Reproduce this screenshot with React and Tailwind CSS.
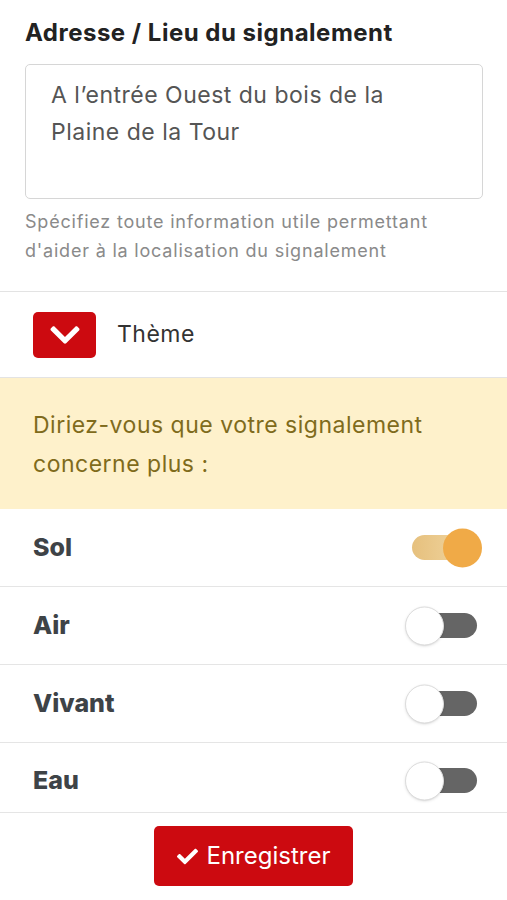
import { useState } from 'react';
import { FaCheck, FaChevronDown } from 'react-icons/fa';

const themes = [
  { id: 'sol', label: 'Sol' },
  { id: 'air', label: 'Air' },
  { id: 'vivant', label: 'Vivant' },
  { id: 'eau', label: 'Eau' },
];

function Toggle({ on, onChange }) {
  return (
    <button
      type="button"
      onClick={onChange}
      className="relative w-[65px] h-[25px] rounded-full shrink-0"
    >
      <span
        className={`absolute inset-0 rounded-full ${
          on ? 'bg-gradient-to-r from-[#e6c07d] to-[#f2d9a6]' : 'bg-[#656565]'
        }`}
      />
      <span
        className={`absolute top-1/2 -translate-y-1/2 w-[39px] h-[39px] rounded-full ${
          on
            ? 'right-[-5px] bg-[#f0aa47]'
            : 'left-[-7px] bg-white border border-[#dcdcdc] shadow-sm'
        }`}
      />
    </button>
  );
}

export default function App() {
  const [address, setAddress] = useState(
    'A l\u2019entrée Ouest du bois de la Plaine de la Tour'
  );
  const [selected, setSelected] = useState('sol');

  return (
    <div className="w-[507px] h-[900px] overflow-hidden bg-white flex flex-col font-['Inter',sans-serif]">
      {/* Address */}
      <div className="px-[25px] pt-[18px] pr-[24px]">
        <label className="block text-[24px] leading-[30px] tracking-[0.5px] font-bold text-[#222]">
          Adresse / Lieu du signalement
        </label>
        <textarea
          value={address}
          onChange={(e) => setAddress(e.target.value)}
          className="mt-[16px] block w-full h-[135px] resize-none rounded-[5px] border border-[#d6d6d6] pl-[25px] pr-[50px] pt-[12px] text-[23px] leading-[37px] tracking-[0.5px] text-[#555] outline-none"
        />
        <p className="mt-[8px] text-[18px] leading-[29px] tracking-[0.8px] text-[#8a8a8a]">
          Spécifiez toute information utile permettant d'aider à la localisation du signalement
        </p>
      </div>

      {/* Theme header */}
      <div className="mt-[26px] border-t border-[#e3e3e3] h-[86px] flex items-center px-[33px] gap-[21px]">
        <div className="w-[63px] h-[46px] rounded-[5px] bg-[#cc0a10] flex items-center justify-center">
          <FaChevronDown className="text-white text-[34px]" />
        </div>
        <span className="text-[23px] tracking-[0.5px] text-[#333]">Thème</span>
      </div>

      {/* Question */}
      <div className="border-t border-[#e3e3e3] bg-[#fef1cb] px-[33px] pr-[40px] pt-[28px] pb-[25px] text-[23px] leading-[39px] tracking-[0.5px] text-[#7f6b1c]">
        Diriez-vous que votre signalement concerne plus :
      </div>

      {/* Options */}
      <div className="flex flex-col">
        {themes.map((t, i) => (
          <div
            key={t.id}
            className={`flex items-center justify-between pl-[33px] pr-[30px] border-b border-[#e5e5e5] ${
              i === themes.length - 1 ? 'h-[70px] pt-[6px]' : 'h-[78px]'
            }`}
          >
            <span className="text-[25px] font-extrabold text-[#3e4347]">{t.label}</span>
            <Toggle on={selected === t.id} onChange={() => setSelected(t.id)} />
          </div>
        ))}
      </div>

      {/* Footer */}
      <div className="flex justify-center pt-[13px]">
        <button
          type="button"
          className="w-[199px] h-[60px] rounded-[5px] bg-[#cc0a10] text-white flex items-center justify-center gap-[9px] text-[24px]"
        >
          <FaCheck className="text-[21px]" />
          Enregistrer
        </button>
      </div>
    </div>
  );
}
